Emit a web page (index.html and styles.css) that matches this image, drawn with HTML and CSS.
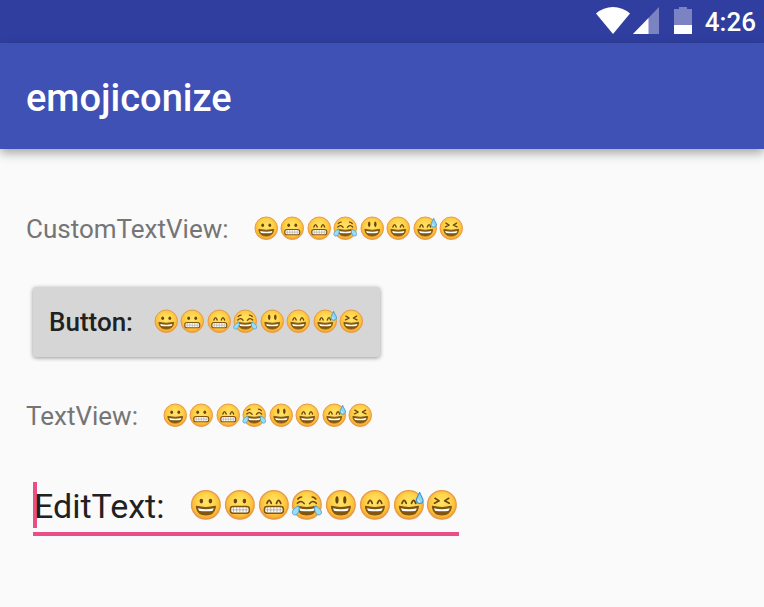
FILE: index.html
```html
<!DOCTYPE html>
<html lang="en">
<head>
<meta charset="utf-8">
<meta name="viewport" content="width=device-width, initial-scale=1">
<title>emojiconize</title>
<link rel="stylesheet" href="styles.css">
</head>
<body>
<svg class="sprite" aria-hidden="true">
  <defs>
    <radialGradient id="skin" cx="50%" cy="42%" r="58%">
      <stop offset="0" stop-color="#ffe468"/>
      <stop offset=".5" stop-color="#ffd54c"/>
      <stop offset=".8" stop-color="#fcbc36"/>
      <stop offset="1" stop-color="#f09a34"/>
    </radialGradient>
    <symbol id="face" viewBox="0 0 32 32">
      <circle cx="16" cy="16" r="13.600" fill="url(#skin)" stroke="#e69a4c" stroke-width="1.200"/>
    </symbol>
    <symbol id="grin-mouth" viewBox="0 0 32 32">
      <path d="M7 17.300Q16 19.500 25 17.300Q24.500 25.500 16 25.500Q7.500 25.500 7 17.300Z" fill="#80550f" stroke="#80550f" stroke-width="1" stroke-linejoin="round"/>
      <path d="M8.600 19.200Q16 21 23.400 19.200Q23 21.200 22 21.700Q16 22.500 10 21.700Q9 21.200 8.600 19.200Z" fill="#fff"/>
    </symbol>
    <symbol id="teeth" viewBox="0 0 32 32">
      <rect x="7" y="17.500" width="18" height="6.400" rx="2.600" fill="#fff" stroke="#80550f" stroke-width="1.400"/>
      <path d="M7.500 20.700H24.500M10 18V23.500M13 18V23.500M16 18V23.500M19 18V23.500M22 18V23.500" stroke="#a89a90" stroke-width=".7" fill="none"/>
    </symbol>
    <symbol id="dot-eyes" viewBox="0 0 32 32">
      <ellipse cx="11.700" cy="12.400" rx="1.700" ry="2.200" fill="#6d430f"/>
      <ellipse cx="20.300" cy="12.400" rx="1.700" ry="2.200" fill="#6d430f"/>
    </symbol>
    <symbol id="arc-eyes" viewBox="0 0 32 32">
      <path d="M9.500 14.500Q11.500 8.800 13.500 14.500M18.500 14.500Q20.500 8.800 22.500 14.500" fill="none" stroke="#6d430f" stroke-width="1.700" stroke-linecap="round"/>
    </symbol>
    <symbol id="e1" viewBox="0 0 32 32"><use href="#face"/><use href="#dot-eyes"/><use href="#grin-mouth"/></symbol>
    <symbol id="e2" viewBox="0 0 32 32"><use href="#face"/><use href="#dot-eyes"/><use href="#teeth"/></symbol>
    <symbol id="e3" viewBox="0 0 32 32"><use href="#face"/><use href="#arc-eyes"/><use href="#teeth"/></symbol>
    <symbol id="e4" viewBox="0 0 32 32">
      <use href="#face"/>
      <path d="M7 14.500Q10.500 10.800 13.500 14.800M18.500 14.800Q21.500 10.800 25 14.500M7.500 10.500Q9 8.500 11 8.500M24.500 10.500Q23 8.500 21 8.500" fill="none" stroke="#6d430f" stroke-width="1.500" stroke-linecap="round"/>
      <use href="#grin-mouth"/>
      <path d="M8.300 17C9.300 20.500 8 25 5 25.500C2.300 25.700 1.600 23.300 2.700 21.300C4 19 6 18 8.300 17Z" fill="#9bdcf7" stroke="#4aa3d4" stroke-width=".9"/>
      <path d="M23.700 17C22.700 20.500 24 25 27 25.500C29.700 25.700 30.400 23.300 29.300 21.300C28 19 26 18 23.700 17Z" fill="#9bdcf7" stroke="#4aa3d4" stroke-width=".9"/>
    </symbol>
    <symbol id="e5" viewBox="0 0 32 32">
      <use href="#face"/>
      <ellipse cx="12.300" cy="11.300" rx="1.500" ry="3.500" fill="#6d430f"/>
      <ellipse cx="19.700" cy="11.300" rx="1.500" ry="3.500" fill="#6d430f"/>
      <use href="#grin-mouth"/>
    </symbol>
    <symbol id="e6" viewBox="0 0 32 32"><use href="#face"/><use href="#arc-eyes"/><use href="#grin-mouth"/></symbol>
    <symbol id="e7" viewBox="0 0 32 32">
      <use href="#e6"/>
      <path d="M26.200 4C27 7.500 29.900 9.500 29.500 12.300C29 15.500 24 15.600 23 12.600C22.200 9.800 25.200 7.500 26.200 4Z" fill="#8bd5f5" stroke="#3f93c4" stroke-width="1"/>
      <path d="M25 11Q25 13 26.500 13.300" stroke="#e3f7ff" stroke-width="1" fill="none"/>
    </symbol>
    <symbol id="e8" viewBox="0 0 32 32">
      <use href="#face"/>
      <path d="M9.500 9.800L13.400 12.200L9 14.400M22.500 9.800L18.600 12.200L23 14.400" fill="none" stroke="#6d430f" stroke-width="1.600" stroke-linecap="round" stroke-linejoin="round"/>
      <use href="#grin-mouth"/>
    </symbol>
  </defs>
</svg>

<div class="status-bar">
  <svg class="wifi" viewBox="0 0 34 27" aria-hidden="true"><path d="M0 6.500Q7.500 0 17 0T34 6.500L17 27Z" fill="#fff"/></svg>
  <svg class="signal" viewBox="0 0 26 27" aria-hidden="true"><path d="M26 0V27H0Z" fill="#7b83c3"/><path d="M15.500 11V27H0Z" fill="#fff"/></svg>
  <svg class="battery" viewBox="0 0 18 27" aria-hidden="true"><path d="M5 0H13V2H18V27H0V2H5Z" fill="#7b83c3"/><path d="M0 18H18V27H0Z" fill="#fff"/></svg>
  <time class="clock">4:26</time>
</div>
<header class="toolbar"><h1>emojiconize</h1></header>

<main class="content">
  <p class="row">
    <span>CustomTextView:</span>
    <span class="emojis">
      <svg><use href="#e1"/></svg><svg><use href="#e2"/></svg><svg><use href="#e3"/></svg><svg><use href="#e4"/></svg><svg><use href="#e5"/></svg><svg><use href="#e6"/></svg><svg><use href="#e7"/></svg><svg><use href="#e8"/></svg>
    </span>
  </p>
  <button class="row button" type="button">
    <span>Button:</span>
    <span class="emojis">
      <svg><use href="#e1"/></svg><svg><use href="#e2"/></svg><svg><use href="#e3"/></svg><svg><use href="#e4"/></svg><svg><use href="#e5"/></svg><svg><use href="#e6"/></svg><svg><use href="#e7"/></svg><svg><use href="#e8"/></svg>
    </span>
  </button>
  <p class="row">
    <span>TextView:</span>
    <span class="emojis">
      <svg><use href="#e1"/></svg><svg><use href="#e2"/></svg><svg><use href="#e3"/></svg><svg><use href="#e4"/></svg><svg><use href="#e5"/></svg><svg><use href="#e6"/></svg><svg><use href="#e7"/></svg><svg><use href="#e8"/></svg>
    </span>
  </p>
  <label class="field">
    <input type="text" value="EditText:" aria-label="EditText">
    <span class="emojis large">
      <svg><use href="#e1"/></svg><svg><use href="#e2"/></svg><svg><use href="#e3"/></svg><svg><use href="#e4"/></svg><svg><use href="#e5"/></svg><svg><use href="#e6"/></svg><svg><use href="#e7"/></svg><svg><use href="#e8"/></svg>
    </span>
  </label>
</main>
</body>
</html>
```
FILE: styles.css
```css
* { box-sizing: border-box; }

body {
  margin: 0;
  background: #fafafa;
  color: #757575;
  font-family: Roboto, sans-serif;
  font-size: 26px;
  line-height: 32px;
}

.sprite { position: absolute; width: 0; height: 0; }

.status-bar {
  display: flex;
  align-items: center;
  justify-content: flex-end;
  height: 43px;
  padding: 0 8px 2px 0;
  background: #303f9f;
  color: #fff;
}

.wifi { width: 34px; height: 27px; margin-right: 3px; }
.signal { width: 26px; height: 27px; margin-right: 15px; }
.battery { width: 18px; height: 27px; margin-right: 13px; }
.clock { font-weight: 500; padding-top: 2px; }

.toolbar {
  display: flex;
  align-items: center;
  height: 106px;
  padding: 4px 26px 0;
  background: #3f51b5;
  color: #fff;
  box-shadow: 0 4px 10px rgba(0, 0, 0, .35);
}

.toolbar h1 { margin: 0; font-size: 38px; font-weight: 500; line-height: 44px; }

.content {
  display: flex;
  flex-direction: column;
  align-items: flex-start;
  padding: 64px 26px;
}

.row {
  display: flex;
  align-items: center;
  gap: 24px;
  margin: 0;
}

.emojis {
  display: grid;
  grid-template-columns: repeat(8, 1fr);
  width: 212px;
  margin-bottom: 2px;
}

.emojis svg { display: block; width: 100%; aspect-ratio: 1; }
.emojis.large { width: 270px; margin: 0; }

.button {
  gap: 20px;
  height: 70px;
  margin: 42px 7px 43px;
  padding: 0 15px 0 16px;
  border: 0;
  border-radius: 3px;
  background: #d6d6d6;
  box-shadow: 0 1px 4px rgba(0, 0, 0, .4);
  color: #212121;
  font: inherit;
  font-weight: 500;
}

.field {
  position: relative;
  display: flex;
  align-items: center;
  height: 54px;
  margin: 50px 7px 0;
  padding-bottom: 4px;
  border-bottom: 4px solid #e94f86;
}

.field::before {
  content: "";
  position: absolute;
  left: 0;
  top: 0;
  width: 4px;
  height: 46px;
  background: #e94f86;
}

.field input {
  position: relative;
  width: 156px;
  padding: 2px 0 0 1px;
  border: 0;
  outline: 0;
  background: transparent;
  color: #212121;
  font: inherit;
  font-size: 34px;
  line-height: 40px;
}
```
